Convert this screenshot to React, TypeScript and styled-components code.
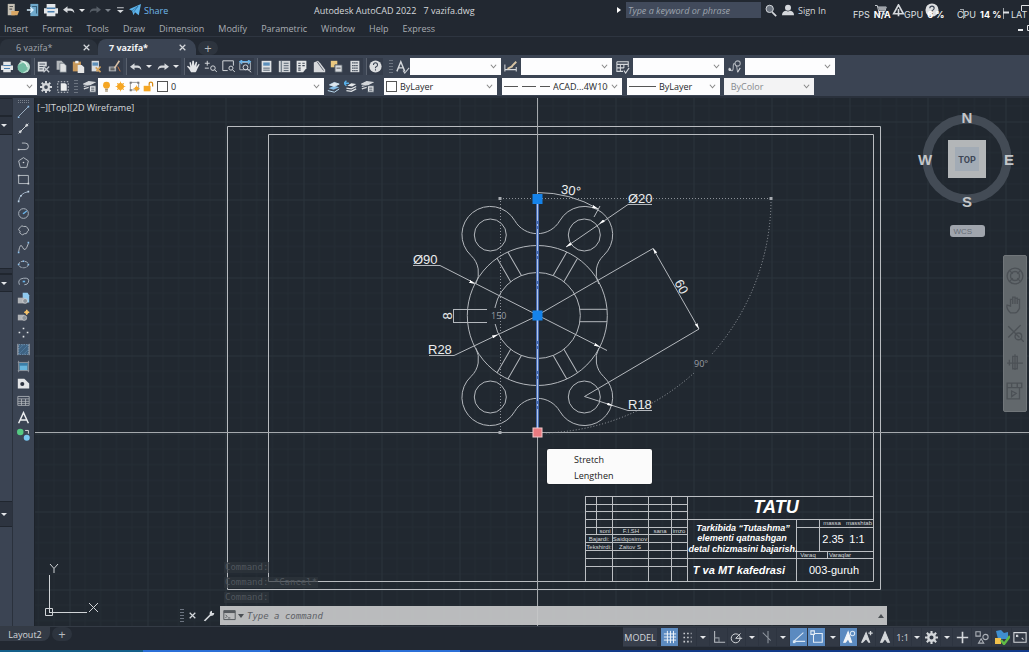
import React from 'react';
import styled, { createGlobalStyle } from 'styled-components';

const c = {
  chrome: '#222831',
  panel: '#3b4453',
  panelDark: '#2d3440',
  canvas: '#212830',
  line: '#c9ccd0',
  text: '#d5d8dc',
  muted: '#a9adb3',
  active: '#5b8ac0',
};

const Global = createGlobalStyle`
  * { box-sizing: border-box; }
  body { margin: 0; background: #fff; font-family: "Open Sans", "Noto Sans", sans-serif; font-size: 9px; color: ${c.text}; overflow: hidden; }
  button, input, select { font: inherit; color: inherit; background: none; border: 0; padding: 0; margin: 0; }
  svg { display: block; flex: none; }
`;

const Shell = styled.div`
  height: calc(100vh - 10px);
  display: flex;
  flex-direction: column;
  background: ${c.chrome};
  overflow: hidden;
`;

const Svg = styled.svg<{ $s?: number }>`
  width: ${(p) => p.$s ?? 14}px;
  height: ${(p) => p.$s ?? 14}px;
  fill: none;
  stroke: ${c.text};
  stroke-width: 1.2;
`;

const Icon = ({ s, children }: { s?: number; children: React.ReactNode }) => (
  <Svg viewBox="0 0 16 16" $s={s} aria-hidden="true">{children}</Svg>
);

const F = '#d5d8dc';
const B = '#69b3e8';
const Y = '#f5a623';

const icons = {
  folder: <><path d="M2 1h8v13H2z" fill="#c6c0b4" stroke="none" /><path d="M4 4h4M4 7h3" stroke="#555" /><path d="M6 9h9l-2 5H6z" fill="#d9a765" stroke="none" /></>,
  openDoc: <><path d="M5 1h9v14H5z" fill="#6fa9cc" stroke="none" /><path d="M7 4h5v8" stroke="#35607d" /><path d="M1 8h7M5 5l3 3-3 3" stroke="#d8eefc" strokeWidth="1.6" /></>,
  print: <><path d="M3 1h10v5H3zM0 6h16v6h-3v3H3v-3H0z" fill="#e3e6e9" stroke="none" /><path d="M4 10h8M3 6h10" stroke="#4b80b0" strokeWidth="1.5" /></>,
  undo: <path d="M6 3v3h4q4 0 5 5v1q-2-3-5-3H6v3L0 7.500z" fill={F} stroke="none" />,
  redo: <path d="M10 3v3H6q-4 0-5 5v1q2-3 5-3h4v3l6-4.500z" fill={F} stroke="none" />,
  redoDim: <path d="M10 3v3H6q-4 0-5 5v1q2-3 5-3h4v3l6-4.500z" fill="#565d66" stroke="none" />,
  customize: <><path d="M4 5h9" /><path d="M4 8h9L8.500 12z" fill={F} stroke="none" /></>,
  plane: <><path d="M0 7L16 0 13 15 8 11l-2 4-2-6z" fill="#5db4ec" stroke="none" /><path d="M4 9l8-6-6 8" stroke="#245c86" strokeWidth=".8" /></>,
  search: <><circle cx="7" cy="6" r="4.500" fill="#6d7580" /><path d="M10 10l5 5" strokeWidth="2" /></>,
  user: <><circle cx="8" cy="5" r="4" fill={F} stroke="none" /><path d="M0 15q0-5 5-6l3 1 3-1q5 1 5 6z" fill={F} stroke="none" /></>,
  cart: <><path d="M0 2h3l2 8h8l2-6H4" /><path d="M4 4h11l-2 5H6z" fill="#9fa3a9" stroke="none" /><circle cx="6" cy="13" r="1" /><circle cx="12" cy="13" r="1" /></>,
  aLogo: <path d="M8 1l6 11H2zM8 6v9" strokeWidth="2" />,
  help: <><circle cx="8" cy="8" r="7.500" fill="#dcdee0" stroke="none" /><path d="M5.500 6q0-2.500 2.500-2.500T10.500 6q0 1.500-2.500 3v1M8 11.500v1.500" stroke="#3b4453" strokeWidth="1.300" /></>,
  globe: <><circle cx="9" cy="8" r="7" fill="#b9dfcf" stroke="none" /><path d="M2 6l6-3 5 3v5l-6 4-5-4z" fill="#72bba2" stroke="none" /><path d="M5 1q6 0 8 7" stroke="#eef5f2" /></>,
  cut: <><path d="M1 2h11v6H9v6H1z" fill="#d5d8dc" stroke="none" /><path d="M3 5h7M3 8h6M3 11h4" stroke="#4a5462" /><path d="M8 8l7 7M15 8l-7 7" stroke="#c4c9cf" strokeWidth="1.600" /></>,
  copy: <><path d="M2 1h6l3 3v8H2z" fill="#b4b8bc" stroke="none" /><path d="M6 4h5l3 3v8H6z" fill="#dfe1e3" stroke="#5b6470" strokeWidth=".8" /></>,
  paste: <><path d="M1 2h10v12H1z" fill="#c8995c" stroke="none" /><path d="M4 1h4v3H4z" fill="#eee" stroke="none" /><path d="M7 6h5l3 3v7H7z" fill="#e6e6e6" stroke="none" /></>,
  sheet: <><path d="M2 1h9v13H2z" fill="#d9dcdf" stroke="none" /><path d="M3 3h7v4H3z" fill="#5c8fbb" stroke="none" /><path d="M7 9l6 6M13 8l-5 6" stroke="#d2a25f" strokeWidth="2" /></>,
  brush: <><path d="M1 8h9v6H1z" fill="#a9adb2" stroke="none" /><path d="M3 10h5M3 12h5" stroke="#444" /><path d="M8 10l6-9" stroke="#d9c0a5" strokeWidth="2" /><path d="M12 8l3 6" stroke="#c8763f" /></>,
  hand: <path d="M5 15Q3 11 0 8l1-1 3 2-1-6 1.500-.5 1.500 5L6.500 1H8.500l.5 6L11 2l1.500.5-1 6 3-4 1 1-3 6q-1 3-2 3.500z" fill="#e3e5e8" stroke="none" />,
  zoomPm: <><path d="M1 4h6M4 1v6M1 10h5" /><circle cx="11" cy="10" r="2.800" /><path d="M13 12l3 3" /></>,
  zoomWin: <><path d="M1 1h13v6M1 1v12h6" /><circle cx="11" cy="10" r="2.500" /><path d="M13 12l3 3" /></>,
  zoomPrev: <><path d="M1 3h13v9H1z" stroke="#aeb4bb" /><path d="M1 2h13M4 0L1 2l3 3M11 0l3 2-3 3" stroke={B} strokeWidth="1.500" /><circle cx="8" cy="9" r="3" /><path d="M10 11l5 4" /></>,
  props: <><path d="M2 1h12v14H2z" fill="#dfe2e5" stroke="none" /><path d="M4 3h8v4H4z" fill="#5c8fbb" stroke="none" /><path d="M4 10h8M4 12.500h8" stroke="#52606e" /></>,
  design: <><path d="M1 1h14v14H1z" fill="#d3d6d9" stroke="none" /><path d="M4 1v14M7 4h6M7 7h6M7 10h6M7 13h6" stroke="#52606e" /></>,
  palettes: <><path d="M2 1h12v9l-4 5H2z" fill="#e4e6e8" stroke="none" /><path d="M4 4h3M9 4h3M4 7h3M9 7h3M4 10h3M4 12.500h3" stroke="#404a57" strokeWidth="1.500" /></>,
  markup: <><path d="M1 3l5-2 3 3 6 8v3H1z" fill="#d7d9dc" stroke="none" /><path d="M5 2l8 11" stroke="#5b6470" /></>,
  blocks: <><path d="M1 1h8v8H1z" fill="#e9c77f" stroke="none" /><path d="M6 6h9v9H6z" fill="#d5d8dc" stroke="#444c58" /><path d="M8 10h5" stroke="#555" /></>,
  calc: <><path d="M3 1h11v14H3z" fill="#dadde0" stroke="none" /><path d="M5 3.500h7M5 7h7M5 10h7M5 13h7" stroke="#4a5462" strokeWidth="1.500" strokeDasharray="2 .500" /></>,
  textStyle: <><path d="M1 13L5.500 2 10 13M3 9h5" strokeWidth="1.600" /><path d="M8 12l2 3 5-6" stroke="#c7cbd0" /></>,
  dimStyle: <><path d="M1 5v8M1 11h13M14 8v5" /><path d="M4 10l6-3M9 7l5-5" stroke="#d8c4a4" strokeWidth="2.200" /></>,
  tableStyle: <><path d="M1 2h13v6M1 2v11h7M1 5h13M1 9h8M5 5v8M9 5v4" /><path d="M9 12l2 3 4-6" /></>,
  leader: <><circle cx="11" cy="4" r="3" stroke="#aeb3ba" /><path d="M1 9q5 7 5-1t4 0l1 6" stroke="#aeb3ba" /><path d="M11 14l3-5" /><circle cx="2" cy="11" r="1" fill={F} /></>,
  gear: <><circle cx="8" cy="8" r="4" strokeWidth="3" /><path d="M8 0v3M8 13v3M0 8h3M13 8h3M2.300 2.300l2.200 2.200M11.500 11.500l2.200 2.200M2.300 13.700l2.200-2.200M11.500 4.500l2.200-2.200" strokeWidth="2.600" /></>,
  selection: <><path d="M5 3h6l2 2v8H5z" fill="#eceeef" stroke="none" /><path d="M1 1h14v14H1z" strokeDasharray="2 2" /></>,
  layers: <><path d="M1 5l6-3 7 1-6 3zM1 8l6-2M1 11l6-2" fill={F} strokeWidth="1.600" /><path d="M8 7h8v8H8z" fill="#dfe1e4" stroke="#4a5462" /><path d="M10 10h4M10 12.500h4" stroke="#4a5462" /></>,
  layerBlue: <><path d="M2 10l7-3 6 2-7 3z" fill="#84bce6" stroke="none" /><path d="M1 13l8 2 6-4M3 6l6-3 6 2-6 3z" stroke="#bcdcf2" /><path d="M3 6l6-3 6 2-6 3z" fill="#dfe6ec" stroke="none" /></>,
  layerBack: <><path d="M4 7l5-3 6 1-5 3z" fill="#e5e8ea" stroke="none" /><path d="M3 10l6 1 6-3M3 13l6 1 6-3" stroke="#dfe2e5" strokeWidth="1.600" /><path d="M0 4h6M3 1L0 4l3 3" stroke="#58b1ea" strokeWidth="1.600" /></>,
  bulb: <><circle cx="8" cy="6" r="5" fill={Y} stroke="none" /><path d="M6 12h4M6 14.500h4" stroke="#8a7040" strokeWidth="1.500" /></>,
  sun: <><circle cx="8" cy="8" r="5" fill={Y} stroke="none" /><path d="M8 1v14M1 8h14M3 3l10 10M13 3L3 13" stroke={Y} /></>,
  vpFreeze: <><path d="M2 2h12v11H2z" stroke="#888" /><path d="M1 1h3v3H1zM12 1h3v3h-3zM1 12h3v3H1z" fill="#777" stroke="none" /><circle cx="11" cy="11" r="3" fill={Y} stroke="none" /><path d="M11 6.500v9M6.500 11h9" stroke={Y} /></>,
  lock: <><path d="M1 7h10v8H1z" fill={Y} stroke="none" /><path d="M9 7V4q0-2.500 2.500-2.500T14 4v4" stroke="#d88b12" strokeWidth="1.800" /></>,
  line: <><path d="M2 14L14 2" stroke="#9fb0c2" /><path d="M1 14h2v2H1zM13 1h2v2h-2z" fill="#8ec0ea" stroke="none" /></>,
  xline: <><path d="M2 14L14 2" /><circle cx="4" cy="12" r="1.200" fill={F} /><circle cx="12" cy="4" r="1.200" fill={F} /></>,
  pline: <><path d="M2 13h8q4 0 4-4t-4-4H6" stroke="#b4bac1" /><path d="M1 12h2v2H1z" fill={F} stroke="none" /></>,
  polygon: <><path d="M8 2l6 4-2 8H4L2 6z" stroke="#b4bac1" /><circle cx="8" cy="8" r="1" fill={F} stroke="none" /></>,
  rect: <><path d="M2 3h12v10H2z" stroke="#b4bac1" /><path d="M1 2h2v2H1zM13 12h2v2h-2z" fill={F} stroke="none" /></>,
  arc: <><path d="M2 14Q3 4 14 2" stroke="#9fb0c2" /><path d="M1 13h2v2H1zM13 1h2v2h-2zM4 6h2v2H4z" fill="#bfd6ea" stroke="none" /></>,
  circle: <><circle cx="8" cy="8" r="6" stroke="#a7b0ba" /><path d="M8 8l4-3" stroke={B} strokeWidth="1.600" /><circle cx="8" cy="8" r="1" fill={B} stroke="none" /></>,
  cloud: <path d="M4 4q2-3 4-1 4-1 5 2 3 3 0 4-1 4-4 3-3 3-4 0-3-1-1-3-4-2 0-5z" stroke="#b4bac1" />,
  spline: <><path d="M2 13Q4 1 7 8t7-5" stroke="#b4bac1" /><path d="M1 13h2v2H1zM13 1h2v2h-2z" fill="#8ec0ea" stroke="none" /></>,
  ellipse: <><ellipse cx="8" cy="8" rx="6" ry="4" stroke="#a7b0ba" strokeDasharray="4 1" /><path d="M1 7h2v2H1zM13 7h2v2h-2zM7 3h2v2H7z" fill="#8ec0ea" stroke="none" /></>,
  ellArc: <><path d="M3 12Q0 5 8 4t6 5q-1 3-5 3" stroke="#a7b0ba" /><path d="M7 7h3v2H7z" fill={B} stroke="none" /></>,
  insert: <><path d="M7 1h6l2 3v9H7z" fill="#8fc9ef" stroke="none" /><path d="M1 7h8v7H1z" fill="#b0b3b7" stroke="none" /><circle cx="10" cy="11" r="3" fill="#8b9299" stroke="#ddd" strokeWidth=".8" /></>,
  block: <><path d="M1 7h8v7H1z" fill="#b0b3b7" stroke="none" /><circle cx="9" cy="11" r="3" fill="#8b9299" stroke="#ccc" strokeWidth=".8" /><path d="M12 1l1 2 2 1-2 1-1 2-1-2-2-1 2-1z" fill="#fbc66a" stroke="#fbc66a" /></>,
  points: <path d="M8 2v2M8 12v2M2 8h2M12 8h2" stroke="#dfe2e5" strokeWidth="2" />,
  hatch: <><path d="M2 2h12v12H2z" fill="#3e6282" stroke="#6f93b2" strokeDasharray="2 1" /><path d="M2 8L8 2M2 14L14 2M8 14l6-6" stroke="#5784a9" strokeWidth=".8" /><path d="M1 1v14M15 1v14" stroke="#a9afb7" /></>,
  gradient: <><path d="M3 4h10v9H3z" fill="#67b4dc" stroke="none" /><path d="M3 3h10v4H3z" fill="#3b7ea8" stroke="none" /><path d="M1 3h14M1 13h14M2 1v14M14 1v14" stroke="#8e959e" /></>,
  region: <><path d="M1 2h8l6 6v6H1z" fill="#e3e5e7" stroke="none" /><circle cx="6.500" cy="8.500" r="2.500" fill="#2d3440" stroke="none" /></>,
  table: <path d="M1 3h14v11H1zM1 6h14M1 9h14M1 11.500h14M5.500 6v8M10.500 6v8" stroke="#b2b6bb" strokeWidth="1" />,
  mtext: <path d="M2 15L8 2l6 13M4.500 11h7" stroke="#eceef0" strokeWidth="1.800" />,
  group: <><circle cx="4" cy="5" r="4" fill="#55c982" stroke="none" /><circle cx="12" cy="12" r="3.700" fill="#79c6f0" stroke="none" /><path d="M10 3h4v4" stroke="#ddd" /></>,
  gridOn: <path d="M5 1v14M8.500 1v14M12 1v14M1 4.500h14M1 8h14M1 11.500h14" stroke="#eef4fa" strokeWidth="1.100" />,
  snap: <path d="M3 3h10M3 8h10M3 13h10" stroke="#c9ccd0" strokeWidth="2" strokeDasharray="2 2.500" />,
  ortho: <><path d="M3 1v13h12" stroke="#b9bdc3" /><path d="M3 9h5v5" stroke="#8d949c" /></>,
  polar: <><circle cx="7" cy="9" r="5.500" /><path d="M7 9h8M7 9l6-6" /></>,
  iso: <path d="M8 1v14M2 3l9 9" stroke="#8f969f" />,
  track: <><path d="M2 13L13 3M2 13h13" stroke="#d9e7f5" /><path d="M1 12h3v3H1z" fill="#d9e7f5" stroke="none" /></>,
  osnap: <><path d="M4 4h10v10H4z" stroke="#e5eef7" /><path d="M1 1h4v4H1z" fill={c.active} stroke="#e5eef7" /></>,
  annoVis: <><path d="M7 2l4 12H9L7 10l-3 4H2z" fill="#f3f6f9" stroke="#f3f6f9" /><circle cx="12" cy="4" r="2.500" stroke="#dbe7f3" /></>,
  annoAuto: <><path d="M7 3l4 11H10L7 10l-4 4H2z" fill={F} /><path d="M12 1v5M9.500 3.500h5" strokeWidth="1.500" /></>,
  anno: <path d="M8 2l5 12h-2L8 10l-3 4H3z" fill={F} />,
  plus: <path d="M8 1v14M1 8h14" strokeWidth="2" />,
  isolate: <><path d="M1 2h5v5H1z" stroke="#adb2b9" /><circle cx="12" cy="8" r="3" stroke="#adb2b9" /><path d="M7 10l3 5H4z" stroke="#adb2b9" /></>,
  perf: <><path d="M2 2l5-1 3 3 4-1v7H4z" fill="#3f8fd0" stroke="none" /><path d="M1 9h6v6H1z" fill="#f0c04c" stroke="none" /><path d="M7 11l3 4 6-8" stroke="#62bd45" strokeWidth="2.400" /></>,
  clean: <><path d="M1 3h14v11H1z" /><path d="M4 6l2 2M12 11l-2-2M4 8V6h2" /></>,
  wrench: <path d="M1 14L9 6Q8 2 12 1v3h3Q15 8 10 8l-7 7z" fill={F} stroke="none" />,
  cross: <path d="M3 3l10 10M13 3L3 13" strokeWidth="2.200" />,
};
type IconName = keyof typeof icons;

const Caret = styled.i<{ $dim?: boolean }>`
  width: 0;
  height: 0;
  flex: none;
  border: 3px solid transparent;
  border-top: 3px solid ${(p) => (p.$dim ? '#7b828b' : '#e4e6e9')};
  border-bottom: 0;
`;

/* ---------- title bar ---------- */
const TitleBar = styled.header`
  flex: 0 0 20px;
  position: relative;
  display: flex;
  align-items: center;
  justify-content: space-between;
`;
const Quick = styled.div`
  display: flex;
  align-items: center;
`;
const IconButton = styled.button<{ $w?: number }>`
  flex: 0 0 ${(p) => p.$w ?? 17}px;
  height: 16px;
  display: flex;
  align-items: center;
  justify-content: center;
`;
const Share = styled.button`
  display: flex;
  align-items: center;
  gap: 3px;
  margin-left: 3px;
  font-size: 9px;
  color: #6fb7ea;
`;
const Title = styled.h1`
  position: absolute;
  left: 314px;
  margin: 0;
  display: flex;
  gap: 7px;
  font-size: 9px;
  font-weight: 400;
  white-space: nowrap;
`;
const TitleRight = styled.div`
  display: flex;
  align-items: center;
  width: 412px;
`;
const SearchBox = styled.input`
  width: 135px;
  height: 16px;
  margin-left: 5px;
  padding-left: 2px;
  background: #414a5b;
  font-style: italic;
  &::placeholder { color: #9fa5ae; opacity: 1; }
`;
const SignIn = styled.button`
  display: flex;
  align-items: center;
  gap: 4px;
  width: 70px;
  margin-left: 3px;
  white-space: nowrap;
`;
const AppIcons = styled.div`
  display: flex;
  align-items: center;
  margin-left: 20px;
`;
const Hud = styled.div`
  position: absolute;
  right: 0;
  top: 9px;
  width: 176px;
  display: flex;
  align-items: center;
  font: 9px/12px Inter, "Liberation Sans", sans-serif;
  color: #dfe1e4;
  white-space: nowrap;
  overflow: hidden;
`;
const HudItem = styled.span<{ $w: number }>`
  flex: 0 0 ${(p) => p.$w}px;
  b { margin-left: 4px; color: #fff; }
`;
const WindowMarks = styled.svg`
  position: absolute;
  right: 0;
  top: 3px;
`;

/* ---------- menu and tabs ---------- */
const MenuBar = styled.nav`
  flex: 0 0 17px;
  display: flex;
  align-items: center;
  gap: 14px;
  padding-left: 4px;
  border-bottom: 1px solid #2e3540;
  color: #a9adb3;
`;
const MenuEnd = styled.svg`
  margin-left: auto;
`;
const Tabs = styled.div`
  flex: 0 0 18px;
  display: flex;
  align-items: flex-end;
`;
const Tab = styled.div<{ $on?: boolean }>`
  width: 98px;
  height: 16px;
  display: flex;
  align-items: center;
  justify-content: space-between;
  padding: 0 7px 0 16px;
  border-radius: 8px 10px 0 0;
  background: ${(p) => (p.$on ? c.panel : '#2b323c')};
  color: ${(p) => (p.$on ? '#f3f4f5' : '#a1a6ad')};
  font-weight: ${(p) => (p.$on ? 700 : 400)};
  & + & { padding: 0 9px 0 11px; }
`;
const AddTab = styled.button`
  width: 20px;
  height: 14px;
  border-radius: 7px;
  margin-left: 2px;
  background: #2d343e;
  font-size: 13px;
  line-height: 12px;
  color: #b5b9bf;
`;

/* ---------- tool rows ---------- */
const Ribbon = styled.div`
  flex: 0 0 43px;
  background: ${c.panel};
  border-bottom: 2px solid #2a313c;
  padding-top: 3px;
  display: flex;
  flex-direction: column;
  gap: 3px;
`;
const ToolRow = styled.div`
  height: 17px;
  display: flex;
  align-items: center;
`;
const ToolGroup = styled.div<{ $w: number; $line?: boolean }>`
  flex: 0 0 ${(p) => p.$w}px;
  height: 17px;
  display: flex;
  align-items: center;
  justify-content: space-around;
  background: #343c4a;
  border-left: ${(p) => (p.$line ? '1px solid #59616e' : '0')};
  margin-right: 3px;
`;
const Grip = styled.span`
  flex: 0 0 4px;
  height: 13px;
  margin: 0 3px;
  background: repeating-linear-gradient(#6c7480 0 1px, transparent 1px 3px);
`;
const Combo = styled.label<{ $w: number; $ml?: number; $dim?: boolean }>`
  flex: 0 0 ${(p) => p.$w}px;
  min-width: 0;
  height: 17px;
  margin-left: ${(p) => p.$ml ?? 0}px;
  display: flex;
  align-items: center;
  gap: 3px;
  padding: 0 4px 0 2px;
  background: ${(p) => (p.$dim ? '#f3f3f4' : '#fdfdfe')};
  color: ${(p) => (p.$dim ? '#86898e' : '#26292d')};
  select { flex: 1; width: 0; min-width: 0; appearance: none; outline: 0; text-overflow: clip; opacity: 1; }
  svg { pointer-events: none; }
`;
const LayerIcons = styled.span`
  display: flex;
  gap: 3px;
  margin-left: 1px;
`;
const Swatch = styled.span`
  flex: 0 0 11px;
  height: 11px;
  border: 1px solid #555;
  background: #fff;
`;
const Chevron = () => (
  <Svg viewBox="0 0 8 8" $s={7} aria-hidden="true"><path d="M1 2l3 3.500L7 2" stroke="#888" /></Svg>
);
const LineSample = ({ dash, w }: { dash?: string; w: number }) => (
  <svg width={w} height="3" aria-hidden="true"><path d={`M0 1.500h${w}`} stroke="#555" strokeDasharray={dash} /></svg>
);

/* ---------- workspace ---------- */
const Workspace = styled.main`
  flex: 1;
  min-height: 0;
  display: flex;
`;
const Palette = styled.aside`
  flex: 0 0 13px;
  display: flex;
  flex-direction: column;
  background: ${c.panel};
  border-right: 1px solid #2a313c;
`;
const PaletteHead = styled.button<{ $h: number }>`
  flex: 0 0 ${(p) => p.$h}px;
  display: flex;
  align-items: center;
  justify-content: center;
  padding-right: 4px;
  background: ${c.panelDark};
  border-top: 1px solid #20262f;
  border-bottom: 1px solid #20262f;
`;
const PaletteBody = styled.div<{ $h?: number }>`
  flex: ${(p) => (p.$h ? `0 0 ${p.$h}px` : '1')};
`;
const DrawBar = styled.div`
  flex: 0 0 22px;
  display: flex;
  flex-direction: column;
  align-items: center;
  padding-top: 2px;
  background: ${c.panel};
  border-right: 1px solid #1d232b;
`;
const DrawGrip = styled.span`
  width: 11px;
  height: 3px;
  border-top: 1px dotted #7b838e;
  border-bottom: 1px dotted #7b838e;
`;
const DrawButton = styled.button`
  height: 17px;
  width: 18px;
  display: flex;
  align-items: center;
  justify-content: center;
`;
const Canvas = styled.section`
  flex: 1;
  min-width: 0;
  position: relative;
  overflow: hidden;
  background: ${c.canvas};
`;
const Drawing = styled.svg`
  position: absolute;
  inset: 0;
  width: 100%;
  height: 100%;
  font-family: "Liberation Sans", Arial, sans-serif;
`;
const ViewLabel = styled.div`
  position: absolute;
  left: 2px;
  top: 3px;
  display: flex;
  line-height: 13px;
`;
const ViewCube = styled.div`
  position: absolute;
  right: 12px;
  top: 11px;
  width: 100px;
  display: flex;
  flex-direction: column;
  align-items: center;
  gap: 16px;
  font-family: "Liberation Sans", Arial, sans-serif;
`;
const Wcs = styled.button`
  width: 35px;
  height: 12px;
  padding-left: 4px;
  border-radius: 3px;
  background: #a0a5ad;
  text-align: left;
  font-size: 8px;
  line-height: 11px;
  color: #666d77;
`;
const NavBar = styled.div`
  position: absolute;
  right: 2px;
  top: 157px;
  width: 24px;
  height: 157px;
  display: flex;
  flex-direction: column;
  align-items: center;
  justify-content: space-evenly;
  border-radius: 2px;
  background: #62686c;
  border: 1px solid #71767a;
  svg { stroke: #4c5156; }
`;
const GripMenu = styled.div`
  position: absolute;
  left: 512px;
  top: 351px;
  width: 105px;
  padding: 3px 0 1px;
  display: flex;
  flex-direction: column;
  gap: 1px;
  border-radius: 2px;
  background: #fbfbfb;
  box-shadow: 0 0 1px #000;
  color: #222;
  button { height: 15px; padding-left: 27px; text-align: left; }
`;
const CommandArea = styled.div`
  position: absolute;
  left: 142px;
  right: 142px;
  bottom: 1px;
  font-family: "DejaVu Sans Mono", "Liberation Mono", monospace;
`;
const History = styled.ol`
  margin: 0 0 1px 47px;
  padding: 0;
  list-style: none;
  li { height: 15px; display: flex; align-items: center; }
  span { background: rgba(48, 54, 61, .65); color: #50565d; line-height: 11px; padding: 0 1px; }
`;
const CommandLine = styled.div`
  height: 19px;
  display: flex;
  align-items: center;
`;
const CommandInput = styled.label`
  flex: 1;
  height: 19px;
  display: flex;
  align-items: center;
  gap: 2px;
  padding: 0 3px;
  background: rgba(198, 199, 200, .93);
  input { flex: 1; min-width: 0; margin-left: 1px; font-style: italic; color: #333; outline: 0; }
  input::placeholder { color: #5d6166; opacity: 1; }
`;

/* ---------- status bar ---------- */
const StatusBar = styled.footer`
  flex: 0 0 24px;
  display: flex;
  justify-content: space-between;
  border-top: 1px solid #343b45;
`;
const Layouts = styled.div`
  display: flex;
  height: 14px;
`;
const LayoutTab = styled.button`
  width: 50px;
  background: #343b46;
  border-radius: 0 0 8px 0;
  line-height: 13px;
`;
const StatusTools = styled.div`
  display: flex;
  align-items: center;
  height: 20px;
  background: #2d3440;
`;
const StatusButton = styled.button<{ $w: number; $on?: boolean }>`
  flex: 0 0 ${(p) => p.$w}px;
  height: 18px;
  margin-right: 1px;
  display: flex;
  align-items: center;
  justify-content: center;
  background: ${(p) => (p.$on ? c.active : '#323945')};
`;
const ModelButton = styled(StatusButton)`
  background: #383f4c;
  margin-right: 4px;
`;
const Taskbar = styled.div`
  flex: 0 0 2px;
  background: linear-gradient(90deg, #14608a 0 143px, #2b70d8 143px 270px, #0c3f9c 270px 380px, #2b70d8 380px 460px, #123a8a 460px);
`;

const Tool = ({ n, w, s, label }: { n: IconName; w?: number; s?: number; label?: string }) => (
  <IconButton $w={w} aria-label={label ?? n}><Icon s={s}>{icons[n]}</Icon></IconButton>
);
const Drop = ({ w, dim }: { w: number; dim?: boolean }) => (
  <IconButton $w={w} aria-label="More"><Caret $dim={dim} /></IconButton>
);
const SDrop = ({ w }: { w: number }) => (
  <StatusButton $w={w} aria-label="Options"><Caret /></StatusButton>
);
const STool = ({ n, w, on, s }: { n: IconName; w: number; on?: boolean; s?: number }) => (
  <StatusButton $w={w} $on={on} aria-label={n}><Icon s={s}>{icons[n]}</Icon></StatusButton>
);

const menus = ['Insert', 'Format', 'Tools', 'Draw', 'Dimension', 'Modify', 'Parametric', 'Window', 'Help', 'Express'];
const drawTools: IconName[] = ['line', 'xline', 'pline', 'polygon', 'rect', 'arc', 'circle', 'cloud', 'spline', 'ellipse', 'ellArc', 'insert', 'block', 'points', 'hatch', 'gradient', 'region', 'table', 'mtext', 'group'];

const contour = 'M-61.500-31.500A24 24 0 0 0-66.300-60A28.300 28.300 0 1 1-22.500-94.800A26 26 0 0 0 22.500-94.800A28.300 28.300 0 1 1 66.300-60A24 24 0 0 0 61.500-31.500';

const Sheet = () => (
  <Drawing role="img" aria-label="Flange drawing with title block">
    <defs>
      <pattern id="grid" x="69.500" y="199.500" width="78" height="78" patternUnits="userSpaceOnUse">
        <path d="M15.600 0v78M31.200 0v78M46.800 0v78M62.400 0v78M0 15.600h78M0 31.200h78M0 46.800h78M0 62.400h78" stroke="#242c34" />
        <path d="M0 .500h78M.500 0v78" stroke="#2b343c" />
      </pattern>
      <marker id="arrow" viewBox="0 0 8 4" refX="8" refY="2" markerWidth="6" markerHeight="3" orient="auto-start-reverse" markerUnits="userSpaceOnUse">
        <path d="M8 2L0 0v4z" fill="#fff" />
      </marker>
    </defs>
    <g transform="translate(-35 -98)" fill="none" stroke="#b4b8bd">
      <rect x="35" y="98" width="3000" height="2000" fill="url(#grid)" stroke="none" />
      <path d="M227.500 126.500H880.500V589.500H227.500zM268.500 134.500H873.500V581.500H268.500z" stroke="#b9bcc0" />

      <path d="M35 432.500H3000M537.500 98V2000" stroke="#a5a9ad" />

      <g transform="translate(537.300 315.500)">
        <circle r="70" />
        <circle r="43" />
        <path d={contour} />
        <path d={contour} transform="translate(0 1) scale(1 -1)" />
        {[-47, 47].map((x) => [-80.5, 81.5].map((y) => <circle key={`${x}${y}`} cx={x} cy={y} r="16" />))}
        {[0, 60, 120, 240, 300].map((a) => (
          <path key={a} d="M42.500-6.200H69.700M42.500 6.200H69.700" transform={`rotate(${a})`} />
        ))}
      </g>
      <rect x="490" y="308" width="17" height="16" fill={c.canvas} stroke="none" />

      <path d="M453 309.500H487M453 322.500H487M453.500 309.500V322.500" />
      <path d="M413 265.500H440L607 350.500" />
      <path d="M429 355.500H454L537 316" />
      <path d="M537 315.500L653 248.500L699 329L584.500 396.500L628 410.500H652" />
      <path d="M652 204.500H628L566 247" />
      <path d="M537 192.500A123 123 0 0 1 598.500 209M600 206L594 217" />
      <g stroke="none">
        <path d="M466 279.500L475 284" markerEnd="url(#arrow)" />
        <path d="M590 342L600 347" markerEnd="url(#arrow)" />
        <path d="M488 339L498 334.500" markerEnd="url(#arrow)" />
        <path d="M610 216.500L599 224" markerEnd="url(#arrow)" />
        <path d="M575 241L566 247" markerEnd="url(#arrow)" />
        <path d="M602 402L613 405.800" markerEnd="url(#arrow)" />
        <path d="M657 255L653 248" markerEnd="url(#arrow)" />
        <path d="M695 322L699 329" markerEnd="url(#arrow)" />
        <path d="M590 205L598 209" markerEnd="url(#arrow)" />
      </g>

      <path d="M500 198.500H771M500.500 198V432" stroke="#8d9299" strokeDasharray="1 2" />
      <path d="M771 199A234 234 0 0 1 712 354M694 373A234 234 0 0 1 545 433" stroke="#9a9fa5" strokeDasharray="1 2" />
      <path d="M498.500 197h3v3h-3zM769.500 197h3v3h-3zM498.500 431h3v3h-3z" fill="#a8acb1" stroke="none" />

      <path d="M537.500 199V432" stroke="#4468ae" strokeWidth="3" />
      <path d="M537.500 199V432" stroke="#b4c5e6" strokeDasharray="22 3 2 3" />
      <path d="M532.500 194h10v10h-10zM532.500 310.500h10v10h-10z" fill="#1583ea" stroke="none" />
      <rect x="533" y="428" width="9" height="9" fill="#ea7b80" stroke="#f3c9cb" />

      <g fill="#eceeef" stroke="none" fontSize="13">
        <text x="413" y="264">Ø90</text>
        <text x="428" y="354">R28</text>
        <text x="628" y="203">Ø20</text>
        <text x="628" y="409">R18</text>
        <text x="571" y="195" textAnchor="middle" transform="rotate(8 571 190)">30°</text>
        <text x="681" y="291" textAnchor="middle" transform="rotate(60 681 287)">60</text>
        <text transform="translate(452 316) rotate(-90)" textAnchor="middle">8</text>
      </g>
      <g fill="#9a9fa5" stroke="none" fontSize="9" fontFamily="Open Sans, Noto Sans, sans-serif">
        <text x="491" y="319">150</text>
        <text x="694" y="367">90°</text>
      </g>

      <g stroke="#bcbfc3">
        <path d="M585.500 496.500H873.500M585.500 496V582M596.500 496V535M612.500 496V582M648.500 496V582M671.500 496V582M687.500 496V582" />
        <path d="M585.500 504.500H687M585.500 511.500H687M585.500 519.500H874M585.500 527.500H687M585.500 534.500H687M585.500 542.500H687M585.500 550.500H687M585.500 558.500H874M585.500 566.500H687" />
        <path d="M796.500 519V582M819.500 519V551M796.500 527.500H874M796.500 551.500H874M827.500 551V558" />
      </g>
      <g fill="#fff" stroke="none" textAnchor="middle">
        <g fontWeight="700" fontStyle="italic">
          <text x="776" y="513" fontSize="18">TATU</text>
          <g fontSize="9">
            <text x="743" y="531">Tarkibida “Tutashma”</text>
            <text x="742" y="541">elementi qatnashgan</text>
            <text x="743" y="552">detal chizmasini bajarish.</text>
          </g>
          <text x="739" y="574" fontSize="11">T va MT kafedrasi</text>
        </g>
        <g fontSize="11">
          <text x="833" y="543">2.35</text>
          <text x="857" y="543">1:1</text>
          <text x="834" y="574">003-guruh</text>
        </g>
        <g fontSize="6" fill="#d5d7da">
          <text x="605" y="533">soni</text>
          <text x="631" y="533">F.I.SH</text>
          <text x="660" y="533">sana</text>
          <text x="679" y="533">imzo</text>
          <text x="599" y="541">Bajardi:</text>
          <text x="630" y="541">Saidqosimov</text>
          <text x="599" y="549">Tekshirdi:</text>
          <text x="630" y="549">Zaitov S</text>
          <text x="832" y="525">massa</text>
          <text x="859" y="525">masshtab</text>
          <text x="808" y="557">Varaq</text>
          <text x="840" y="557">Varaqlar</text>
        </g>
      </g>

      <path d="M45.500 608.500h7v7h-7zM49 612.500H87M49.500 612V575M50 564l4 4.500 4-4.500M54 568.500V573M89 603l9 9M98 603l-9 9" stroke="#d0d3d6" />
    </g>
  </Drawing>
);

export default function App() {
  return (
    <Shell>
      <Global />
      <TitleBar>
        <Quick>
          <Tool n="folder" w={26} label="Open" />
          <Tool n="openDoc" w={14} label="Open from web" />
          <Tool n="print" w={22} label="Plot" />
          <Tool n="undo" w={14} s={12} label="Undo" /><Drop w={12} />
          <Tool n="redoDim" w={14} s={12} label="Redo" /><Drop w={12} dim />
          <Tool n="customize" w={12} s={12} label="Customize" />
          <Share><Icon s={12}>{icons.plane}</Icon>Share</Share>
        </Quick>
        <Title><span>Autodesk AutoCAD 2022</span><span>7 vazifa.dwg</span></Title>
        <TitleRight>
          <svg width="4" height="6" aria-hidden="true"><path d="M0 0l4 3-4 3z" fill="#fff" /></svg>
          <SearchBox type="search" aria-label="Search" placeholder="Type a keyword or phrase" />
          <Tool n="search" w={18} s={13} label="Search" />
          <SignIn><Icon s={12}>{icons.user}</Icon>Sign In</SignIn>
          <AppIcons>
            <Tool n="cart" w={18} s={12} label="App store" />
            <Tool n="aLogo" w={16} s={13} label="Autodesk account" />
            <Tool n="help" w={52} s={14} label="Help" />
          </AppIcons>
        </TitleRight>
        <Hud>
          <HudItem $w={51}>FPS<b>N/A</b></HudItem>
          <HudItem $w={53}>GPU<b>6 %</b></HudItem>
          <HudItem $w={54}>CPU<b>14 %</b></HudItem>
          <HudItem $w={18}>LAT</HudItem>
        </Hud>
        <WindowMarks width="84" height="18" fill="none" stroke="#dfe1e4" aria-hidden="true">
          <path d="M18.500 6v10M15 6.500h4M58.500 5v11" stroke="#9da2a8" />
          <path d="M58 9.500h6" strokeWidth="2" />
          <path d="M76.500 8V2.500H84" />
        </WindowMarks>
      </TitleBar>

      <MenuBar>
        {menus.map((m) => <button key={m}>{m}</button>)}
        <MenuEnd width="12" height="8" stroke="#e4e6e9" fill="none" aria-hidden="true">
          <path d="M1 6h5" strokeWidth="2" /><path d="M12 1.500h-1.500v5H12" />
        </MenuEnd>
      </MenuBar>

      <Tabs>
        <Tab>6 vazifa*<button aria-label="Close 6 vazifa"><Icon s={9}>{icons.cross}</Icon></button></Tab>
        <Tab $on>7 vazifa*<button aria-label="Close 7 vazifa"><Icon s={9}>{icons.cross}</Icon></button></Tab>
        <AddTab aria-label="New drawing">+</AddTab>
      </Tabs>

      <Ribbon>
        <ToolRow>
          <ToolGroup $w={31}><Tool n="print" w={12} s={12} /><Tool n="globe" w={14} /></ToolGroup>
          <ToolGroup $w={89} $line>{(['cut', 'copy', 'paste', 'sheet', 'brush'] as IconName[]).map((n) => <Tool key={n} n={n} w={15} s={13} />)}</ToolGroup>
          <ToolGroup $w={55} $line><Tool n="undo" w={16} s={12} /><Drop w={8} /><Tool n="redo" w={16} s={12} /><Drop w={8} /></ToolGroup>
          <ToolGroup $w={70} $line>{(['hand', 'zoomPm', 'zoomWin', 'zoomPrev'] as IconName[]).map((n) => <Tool key={n} n={n} w={15} s={13} />)}</ToolGroup>
          <ToolGroup $w={106} $line>{(['props', 'design', 'palettes', 'markup', 'blocks', 'calc'] as IconName[]).map((n) => <Tool key={n} n={n} w={15} s={13} />)}</ToolGroup>
          <ToolGroup $w={17} $line><Tool n="help" w={15} s={13} /></ToolGroup>
          <Grip />
          <Tool n="textStyle" w={14} />
          <Combo $w={91}><select aria-label="Text style" /><Chevron /></Combo>
          <Tool n="dimStyle" w={20} />
          <Combo $w={91}><select aria-label="Dimension style" /><Chevron /></Combo>
          <Tool n="tableStyle" w={21} />
          <Combo $w={91}><select aria-label="Table style" /><Chevron /></Combo>
          <Tool n="leader" w={21} />
          <Combo $w={90}><select aria-label="Multileader style" /><Chevron /></Combo>
        </ToolRow>
        <ToolRow>
          <Combo $w={37}><select aria-label="Workspace" /><Chevron /></Combo>
          <Tool n="gear" w={18} s={12} /><Tool n="selection" w={16} s={12} />
          <Grip />
          <Tool n="layers" w={17} s={13} />
          <Combo $w={226}>
            <LayerIcons>{(['bulb', 'sun', 'vpFreeze', 'lock'] as IconName[]).map((n) => <Icon key={n} s={11}>{icons[n]}</Icon>)}</LayerIcons>
            <Swatch />
            <select aria-label="Layer"><option>0</option></select><Chevron />
          </Combo>
          <Tool n="layerBlue" w={18} s={13} /><Tool n="layerBack" w={17} s={13} /><Tool n="layers" w={16} s={13} label="Layer states" />
          <Combo $w={113} $ml={9}><Swatch /><select aria-label="Colour"><option>ByLayer</option></select><Chevron /></Combo>
          <Combo $w={120} $ml={5}><LineSample w={46} dash="14 4" /><select aria-label="Linetype"><option>ACAD...4W100</option></select><Chevron /></Combo>
          <Combo $w={93} $ml={5}><LineSample w={27} /><select aria-label="Lineweight"><option>ByLayer</option></select><Chevron /></Combo>
          <Combo $w={90} $ml={4} $dim><select aria-label="Plot style" disabled><option>&nbsp; ByColor</option></select><Chevron /></Combo>
        </ToolRow>
      </Ribbon>

      <Workspace>
        <Palette>
          <PaletteHead $h={18} aria-label="Palette" />
          <PaletteHead $h={19} aria-label="Collapse section"><Caret /></PaletteHead>
          <PaletteBody $h={133} />
          <PaletteHead $h={6} aria-label="Resize" />
          <PaletteHead $h={18} aria-label="Collapse section"><Caret /></PaletteHead>
          <PaletteBody $h={209} />
          <PaletteHead $h={26} aria-label="Collapse section"><Caret /></PaletteHead>
          <PaletteBody />
        </Palette>
        <DrawBar>
          <DrawGrip />
          {drawTools.map((n) => <DrawButton key={n} aria-label={n}><Icon s={13}>{icons[n]}</Icon></DrawButton>)}
        </DrawBar>
        <Canvas>
          <Sheet />
          <ViewLabel><button>[−]</button><button>[Top]</button><button>[2D Wireframe]</button></ViewLabel>
          <ViewCube>
            <svg width="100" height="100" aria-label="View cube">
              <circle cx="50" cy="50" r="40" fill="none" stroke="#434b55" strokeWidth="9" />
              <g fill="#c3c6c9" fontSize="15" fontWeight="700" textAnchor="middle">
                <text x="50" y="14">N</text><text x="50" y="98">S</text><text x="8" y="56">W</text><text x="92" y="56">E</text>
              </g>
              <rect x="31" y="31" width="38" height="38" fill="#b3b6b8" />
              <rect x="38" y="38" width="24" height="24" fill="#a2abb5" />
              <text x="50" y="54" fill="#3d4656" fontSize="9" fontWeight="700" textAnchor="middle" fontFamily="Roboto">TOP</text>
            </svg>
            <Wcs>WCS</Wcs>
          </ViewCube>
          <NavBar>
            <Icon s={18}><circle cx="8" cy="8" r="7" /><circle cx="8" cy="8" r="4" /><path d="M3 3l3 3M13 3l-3 3M3 13l3-3M13 13l-3-3" /></Icon>
            <Icon s={18}><path d="M4 15Q0 11 1 8l3 1V3h2v4-6h2v6-5h2v5-4h2v8q-2 4-4 4z" /></Icon>
            <Icon s={18}><path d="M2 2l10 10M13 1L2 12" /><circle cx="11" cy="11" r="3" /><path d="M13 13l3 3" /></Icon>
            <Icon s={18}><path d="M8 1v14M6 3h4v11H6zM1 9h14M3 6v5" /></Icon>
            <Icon s={18}><path d="M1 1h13v4H1zM5 1v4M10 1v4M1 5h11v10H1zM5 8l4 2-4 3z" /></Icon>
          </NavBar>
          <GripMenu role="menu"><button role="menuitem">Stretch</button><button role="menuitem">Lengthen</button></GripMenu>
          <CommandArea>
            <History><li><span>Command:</span></li><li><span>Command: *Cancel*</span></li><li><span>Command:</span></li></History>
            <CommandLine>
              <Grip />
              <Tool n="cross" w={10} s={9} label="Close" />
              <Tool n="wrench" w={23} s={12} label="Customize" />
              <CommandInput>
                <Icon s={13}><path d="M1 2h14v11H1z" stroke="#55595e" /><path d="M1 3.500h14" stroke="#55595e" strokeWidth="3" /><path d="M3 7l2 2-2 2M6 11h3" stroke="#55595e" /></Icon>
                <svg width="6" height="4" aria-hidden="true"><path d="M0 0h6L3 4z" fill="#4a4e53" /></svg>
                <input aria-label="Command" placeholder="Type a command" />
                <svg width="6" height="4" aria-hidden="true"><path d="M0 4h6L3 0z" fill="#4a4e53" /></svg>
              </CommandInput>
            </CommandLine>
          </CommandArea>
        </Canvas>
      </Workspace>

      <StatusBar>
        <Layouts><LayoutTab>Layout2</LayoutTab><AddTab aria-label="New layout">+</AddTab></Layouts>
        <StatusTools>
          <ModelButton $w={34}>MODEL</ModelButton>
          <STool n="gridOn" w={17} on /><STool n="snap" w={17} s={13} /><SDrop w={12} />
          <STool n="ortho" w={17} /><STool n="polar" w={17} s={13} /><SDrop w={12} />
          <STool n="iso" w={17} /><SDrop w={12} />
          <STool n="track" w={17} on /><STool n="osnap" w={17} on /><SDrop w={13} />
          <STool n="annoVis" w={17} on /><STool n="annoAuto" w={17} /><STool n="anno" w={17} />
          <StatusButton $w={17}>1:1</StatusButton><SDrop w={9} />
          <STool n="gear" w={18} s={13} /><SDrop w={11} />
          <STool n="plus" w={18} s={13} /><STool n="isolate" w={19} /><STool n="perf" w={19} s={16} /><STool n="clean" w={16} />
        </StatusTools>
      </StatusBar>
      <Taskbar />
    </Shell>
  );
}
